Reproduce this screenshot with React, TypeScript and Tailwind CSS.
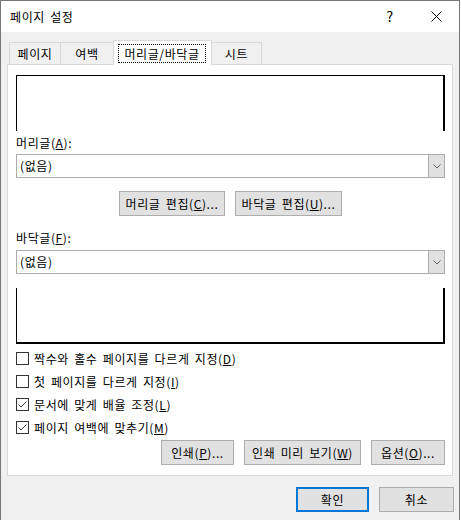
import React from "react";

const font = { fontFamily: '"Noto Sans CJK KR", "Noto Sans", "Liberation Sans", sans-serif' };

function Btn({ w, children, primary }: { w: string; children: React.ReactNode; primary?: boolean }) {
  return (
    <div
      className={
        "h-[25px] flex items-center justify-center bg-[#e1e1e1] text-[12px] leading-none text-black " +
        (primary ? "border-2 border-[#0078d7] " : "border border-[#adadad] ") +
        w
      }
    >
      {children}
    </div>
  );
}

function Select() {
  return (
    <div className="h-[24px] w-[429px] flex border border-[#acacac] bg-white">
      <div className="flex-1 flex items-center pl-[3px] text-[12px] text-black">(없음)</div>
      <div className="w-[17px] -my-px -mr-px border border-[#acacac] bg-[#e1e1e1] flex items-center justify-center">
        <svg width="8" height="5" viewBox="0 0 8 5">
          <polyline points="0.5,0.5 4,4 7.5,0.5" fill="none" stroke="#606060" strokeWidth="1" />
        </svg>
      </div>
    </div>
  );
}

function Check({ checked, children }: { checked?: boolean; children: React.ReactNode }) {
  return (
    <div className="h-[23px] flex items-center text-[12px] text-black">
      <div className="w-[13px] h-[13px] border border-[#333333] bg-white flex items-center justify-center">
        {checked && (
          <svg width="11" height="11" viewBox="0 0 11 11">
            <polyline points="1.5,5.5 4,8 9.5,2.5" fill="none" stroke="#444" strokeWidth="1" />
          </svg>
        )}
      </div>
      <span className="ml-[5px]">{children}</span>
    </div>
  );
}

export default function App() {
  return (
    <div style={font} className="w-[460px] h-[520px] border-l border-t border-r border-[#777777] bg-[#f0f0f0] flex flex-col text-black tracking-[0.6px] [word-spacing:2px]">
      {/* title bar */}
      <div className="h-[31px] bg-white flex items-center">
        <div className="pl-[9px] flex-1 text-[12px]">페이지 설정</div>
        <div className="w-[46px] h-full flex items-center justify-center text-[14px]">?</div>
        <div className="w-[46px] h-full flex items-center justify-center">
          <svg width="11" height="11" viewBox="0 0 11 11">
            <line x1="0.5" y1="0.5" x2="10.5" y2="10.5" stroke="#000" strokeWidth="1" />
            <line x1="10.5" y1="0.5" x2="0.5" y2="10.5" stroke="#000" strokeWidth="1" />
          </svg>
        </div>
      </div>

      {/* tabs */}
      <div className="mt-[8px] h-[25px] flex items-end text-[12px]">
        <div className="ml-[8px] w-[52px] h-[23px] border border-b-0 border-[#d9d9d9] flex items-center justify-center">페이지</div>
        <div className="-ml-px w-[54px] h-[23px] border border-b-0 border-[#d9d9d9] flex items-center justify-center">여백</div>
        <div className="-ml-px w-[99px] h-[25px] relative z-10 bg-white border border-b-0 border-[#d9d9d9] flex pt-[3px] pl-[4px] pr-[5px]">
          <div className="h-[19px] flex-1 border border-dotted border-black flex items-center justify-center">머리글/바닥글</div>
        </div>
        <div className="-ml-px w-[51px] h-[23px] border border-b-0 border-[#d9d9d9] flex items-center justify-center">시트</div>
      </div>

      {/* panel */}
      <div className="-mt-px ml-[6px] w-[446px] h-[412px] border border-[#d9d9d9] bg-white flex flex-col pl-[8px]">
        <div className="mt-[10px] h-[56px] w-[429px] border-t border-l border-r-2 border-black" />
        <div className="mt-[4px] h-[16px] leading-[16px] text-[12px]">
          머리글(<u>A</u>):
        </div>
        <div className="mt-[3px]">
          <Select />
        </div>
        <div className="mt-[13px] w-[429px] flex justify-center gap-[10px]">
          <Btn w="w-[106px]">
            머리글 편집(<u>C</u>)...
          </Btn>
          <Btn w="w-[107px]">
            바닥글 편집(<u>U</u>)...
          </Btn>
        </div>
        <div className="mt-[14px] h-[16px] leading-[16px] text-[12px]">
          바닥글(<u>F</u>):
        </div>
        <div className="mt-[4px]">
          <Select />
        </div>
        <div className="mt-[14px] h-[56px] w-[429px] border-l border-r-2 border-b-2 border-black" />
        <div className="mt-[3px] flex flex-col">
          <Check>
            짝수와 홀수 페이지를 다르게 지정(<u>D</u>)
          </Check>
          <Check>
            첫 페이지를 다르게 지정(<u>I</u>)
          </Check>
          <Check checked>
            문서에 맞게 배율 조정(<u>L</u>)
          </Check>
          <Check checked>
            페이지 여백에 맞추기(<u>M</u>)
          </Check>
        </div>
        <div className="mt-[1px] w-[429px] flex justify-end gap-[10px]">
          <Btn w="w-[73px]">
            인쇄(<u>P</u>)...
          </Btn>
          <Btn w="w-[117px]">
            인쇄 미리 보기(<u>W</u>)
          </Btn>
          <Btn w="w-[74px]">
            옵션(<u>O</u>)...
          </Btn>
        </div>
      </div>

      {/* bottom buttons */}
      <div className="mt-[11px] flex justify-end gap-[10px] pr-[5px]">
        <Btn w="w-[73px]" primary>
          확인
        </Btn>
        <Btn w="w-[75px]">취소</Btn>
      </div>
    </div>
  );
}
